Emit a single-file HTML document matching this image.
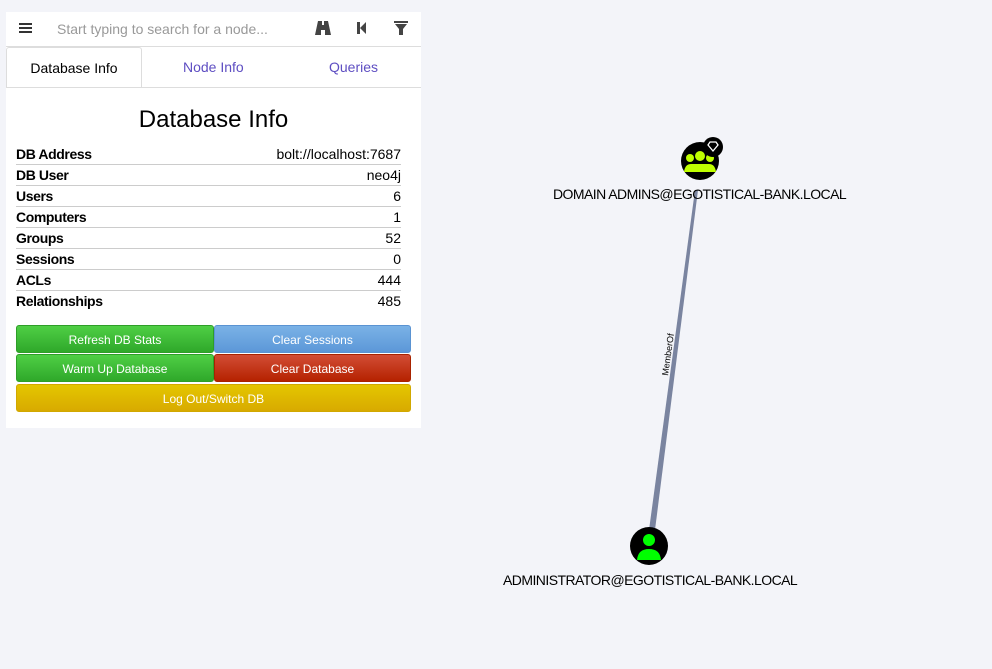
<!DOCTYPE html><html><head><style>
body{margin:0;width:992px;height:669px;background:#f3f4f9;font-family:"Liberation Sans",sans-serif;position:relative;overflow:hidden}
.p{position:absolute;left:6px;top:12px;width:415px;height:416px;background:#fff}
.t{position:absolute;font-size:14px}
.row{position:absolute;left:10px;width:385px;height:20px;border-bottom:1px solid #ccc;font-size:14px;line-height:20px}
.row b{float:left;font-weight:bold;letter-spacing:-0.4px}.row span{float:right}
.btn{position:absolute;height:28px;color:#fff;font-size:12px;text-align:center;line-height:28px;border-radius:3px;box-sizing:border-box}
.g{background:linear-gradient(#4fcf45,#2fa82a);border:1px solid #2e9e28}
.lbl{position:absolute;font-size:14px;color:#000;white-space:nowrap;letter-spacing:-0.55px}
</style></head><body>
<div class="p">
<svg style="position:absolute;left:13px;top:10px" width="13" height="12"><path d="M0 1h13v2H0zM0 5h13v2H0zM0 9h13v2H0z" fill="#333"/></svg>
<div style="position:absolute;left:40px;top:0;width:258px;height:34px;background:#fff;color:#999;font-size:14px;line-height:34px;padding-left:11px;box-sizing:border-box">Start typing to search for a node...</div>
<svg style="position:absolute;left:308px;top:8px" width="18" height="16"><path d="M4 1h4v4h2V1h4l3 14h-6v-5H7v5H1z" fill="#444"/></svg>
<svg style="position:absolute;left:350px;top:9px" width="12" height="14"><path d="M1 1h3v12H1zM4 7l6-6v12z" fill="#444"/></svg>
<svg style="position:absolute;left:388px;top:8px" width="14" height="16"><path d="M0 1h14v2H0zM1 4h12l-4 5v6H5V9z" fill="#444"/></svg>
<div style="position:absolute;left:0;top:34px;width:415px;border-top:1px solid #ddd"></div>
<div style="position:absolute;left:0;top:35px;width:136px;height:40px;border:1px solid #ddd;border-bottom:none;border-radius:3px 3px 0 0;box-sizing:border-box;font-size:14px;text-align:center;line-height:40px">Database Info</div>
<div class="t" style="left:177px;top:47px;color:#5e4ec2">Node Info</div>
<div class="t" style="left:323px;top:47px;color:#5e4ec2">Queries</div>
<div style="position:absolute;left:0;top:75px;width:415px;border-top:1px solid #ddd"></div>
<div style="position:absolute;left:0;top:94px;width:415px;text-align:center;font-size:24px">Database Info</div>
<div class="row" style="top:132px"><b>DB Address</b><span>bolt://localhost:7687</span></div>
<div class="row" style="top:153px"><b>DB User</b><span>neo4j</span></div>
<div class="row" style="top:174px"><b>Users</b><span>6</span></div>
<div class="row" style="top:195px"><b>Computers</b><span>1</span></div>
<div class="row" style="top:216px"><b>Groups</b><span>52</span></div>
<div class="row" style="top:237px"><b>Sessions</b><span>0</span></div>
<div class="row" style="top:258px"><b>ACLs</b><span>444</span></div>
<div class="row" style="top:279px;border:none"><b>Relationships</b><span>485</span></div>
<div class="btn g" style="left:10px;top:313px;width:198px">Refresh DB Stats</div>
<div class="btn" style="left:208px;top:313px;width:197px;background:linear-gradient(#7ab2e6,#5c97d8);border:1px solid #5a93d2">Clear Sessions</div>
<div class="btn g" style="left:10px;top:342px;width:198px">Warm Up Database</div>
<div class="btn" style="left:208px;top:342px;width:197px;background:linear-gradient(#d24d35,#b52200);border:1px solid #a82300">Clear Database</div>
<div class="btn" style="left:10px;top:372px;width:395px;background:linear-gradient(#e4c600,#d8aa00);border:1px solid #d1a800">Log Out/Switch DB</div>
</div>
<svg style="position:absolute;left:0;top:0" width="992" height="669">
<polygon points="695,190 698,190 655,530 649,530" fill="#7a84a0"/>
<text x="0" y="0" font-size="9" font-family="Liberation Sans" transform="translate(668,376) rotate(-82)">MemberOf</text>
<circle cx="700" cy="161" r="19" fill="#000"/>
<circle cx="700" cy="156" r="5" fill="#bfff00"/><circle cx="690" cy="158" r="4" fill="#bfff00"/><circle cx="710" cy="158" r="4" fill="#bfff00"/>
<path d="M684 172q1-8 7-8h18q6 0 7 8z" fill="#bfff00"/><path d="M691 172q0-8 9-8t9 8z" fill="#bfff00"/>
<circle cx="713" cy="147" r="10" fill="#000"/>
<path d="M708 145l2-3h6l2 3-5 6z" fill="none" stroke="#fff" stroke-width="1.3"/>
<circle cx="649" cy="546" r="19" fill="#000"/>
<circle cx="649" cy="540" r="6" fill="#00ff00"/>
<path d="M637 560q1-11 12-11t12 11z" fill="#00ff00"/>
</svg>
<div class="lbl" style="left:553px;top:186px">DOMAIN ADMINS@EGOTISTICAL-BANK.LOCAL</div>
<div class="lbl" style="left:503px;top:572px">ADMINISTRATOR@EGOTISTICAL-BANK.LOCAL</div>
</body></html>
